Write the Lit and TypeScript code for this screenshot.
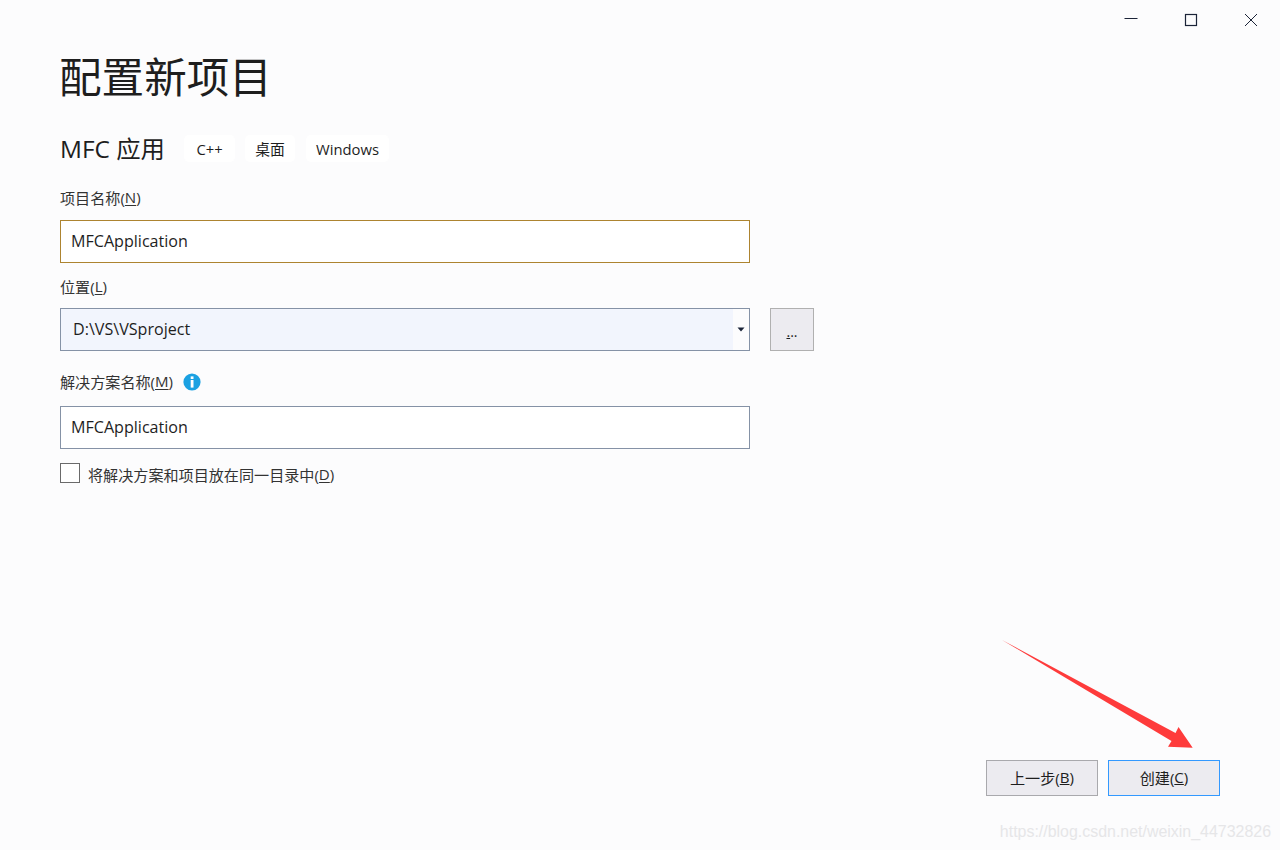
import { LitElement, html, css } from "lit";
import { customElement } from "lit/decorators.js";

@customElement("app-root")
export class AppRoot extends LitElement {
  static styles = css`
    :host { display: block; width: 1280px; height: 850px; position: relative; overflow: hidden;
      background: #fcfcfd; color: #1e1e1e;
      font-family: "Open Sans", "Noto Sans CJK SC", sans-serif; font-size: 15.1px; }
    * { box-sizing: border-box; }
    .page { height: 850px; display: flex; flex-direction: column; }
    .winbar { height: 40px; display: flex; justify-content: flex-end; flex: none; }
    .winbtn { width: 60px; height: 40px; padding-left: 2px; display: flex; align-items: center; justify-content: center; }
    .content { padding: 0 60px; display: flex; flex-direction: column; flex: 1; }
    h1 { margin: 7px 0 0; font: 400 42.6px/56px "Noto Sans CJK SC", sans-serif; color: #1e1e1e; height: 56px; margin-left: -1px; }
    .sub { margin-top: 32px; display: flex; align-items: center; height: 27px; }
    .sub h2 { margin: 0 19px 0 0; width: 105px; white-space: nowrap; font: 400 24.4px/27px "Open Sans", "Noto Sans CJK SC", sans-serif; }
    .tag { height: 27px; background: #fff; border-radius: 5px; margin-right: 10px;
      display: flex; align-items: center; justify-content: center; font-size: 14.8px; }
    .t1 { width: 51px; }
    .t2 { width: 50px; }
    .t3 { width: 83px; margin-left: 1px; }
    .label { display: flex; align-items: center; height: 22px; font-size: 15.1px; color: #333; white-space: nowrap; }
    .label u { text-underline-offset: 2px; }
    .l1 { margin-top: 24px; }
    .l2 { margin-top: 12px; }
    .l3 { margin-top: 19px; }
    .field { margin-top: 12px; width: 690px; height: 43px; border: 1px solid #8592a6; background: #fff;
      display: flex; align-items: center; padding-left: 10px; padding-bottom: 2px; font-size: 16.1px; color: #1e1e1e; }
    .field.active { border-color: #ad8430; }
    .field.sol { margin-top: 14px; }
    .row { display: flex; align-items: stretch; margin-top: 11px; height: 43px; }
    .combo { width: 690px; border: 1px solid #8592a6; display: flex; background: #fcfcfd; }
    .combo .val { width: 672px; background: #f2f5fd; display: flex; align-items: center; padding-left: 12px; padding-bottom: 2px; font-size: 16.1px; }
    .combo .arrow { flex: 1; display: flex; align-items: center; justify-content: center; }
    .browse { margin-left: 20px; width: 44px; border: 1px solid #b0b0b0; background: #ecebf0;
      display: flex; align-items: center; justify-content: center; font-size: 14px; padding-top: 4px; }
    .info { margin-left: 10px; margin-top: 2px; display: block; }
    .check { margin-top: 14px; display: flex; align-items: center; height: 20px; }
    .check .label { padding-top: 1px; }
    .box { width: 20px; height: 20px; border: 1px solid #6a6a6a; background: #fff; margin-right: 8px; }
    .spacer { flex: 1; }
    .footer { display: flex; justify-content: flex-end; gap: 10px; padding-bottom: 54px; }
    .btn { width: 112px; height: 36px; border: 1px solid #a9a9ad; background: #ecebf0; padding-bottom: 2px;
      display: flex; align-items: center; justify-content: center; font-size: 15.1px; color: #1e1e1e; }
    .btn.primary { border-color: #3399ff; }
    .annot { position: absolute; left: 0; top: 0; pointer-events: none; }
    .wm { position: absolute; right: 9px; top: 822px; font: 15.95px/20px "Liberation Sans", sans-serif; color: #e6e6e8; white-space: nowrap; }
  `;

  render() {
    return html`
      <div class="page">
        <div class="winbar">
          <div class="winbtn"><svg width="14" height="14" viewBox="0 0 14 14"><path d="M0.5 5.5H13.5" stroke="#1b2438" stroke-width="1"/></svg></div>
          <div class="winbtn"><svg width="14" height="14" viewBox="0 0 14 14"><rect x="1.5" y="1.5" width="11" height="11" fill="none" stroke="#1b2438" stroke-width="1.2"/></svg></div>
          <div class="winbtn"><svg width="14" height="14" viewBox="0 0 14 14"><path d="M1 1L13 13M13 1L1 13" stroke="#1b2438" stroke-width="1"/></svg></div>
        </div>
        <div class="content">
          <h1>配置新项目</h1>
          <div class="sub">
            <h2>MFC 应用</h2>
            <div class="tag t1">C++</div>
            <div class="tag t2">桌面</div>
            <div class="tag t3">Windows</div>
          </div>
          <div class="label l1">项目名称(<u>N</u>)</div>
          <div class="field active">MFCApplication</div>
          <div class="label l2">位置(<u>L</u>)</div>
          <div class="row">
            <div class="combo">
              <div class="val">D:\\VS\\VSproject</div>
              <div class="arrow"><svg width="8" height="5" viewBox="0 0 8 5"><path d="M0.5 0.5H7.5L4 4.5Z" fill="#1b2438"/></svg></div>
            </div>
            <div class="browse"><u>.</u>..</div>
          </div>
          <div class="label l3">解决方案名称(<u>M</u>)
            <svg class="info" width="18" height="18" viewBox="0 0 18 18"><circle cx="9" cy="9" r="8.6" fill="#1ba1e2"/><rect x="7.7" y="3.4" width="2.8" height="2.6" fill="#fff"/><rect x="7.7" y="7" width="2.8" height="7.6" fill="#fff"/></svg>
          </div>
          <div class="field sol">MFCApplication</div>
          <div class="check"><div class="box"></div><div class="label">将解决方案和项目放在同一目录中(<u>D</u>)</div></div>
          <div class="spacer"></div>
          <div class="footer">
            <div class="btn">上一步(<u>B</u>)</div>
            <div class="btn primary">创建(<u>C</u>)</div>
          </div>
        </div>
      </div>
      <svg class="annot" width="1280" height="850" viewBox="0 0 1280 850">
        <polygon points="1002,640 1175.5,733 1178.5,727 1192.7,747.7 1168,746.7 1171.5,741" fill="#fe3b3b"/>
      </svg>
      <div class="wm">https://blog.csdn.net/weixin_44732826</div>
    `;
  }
}
